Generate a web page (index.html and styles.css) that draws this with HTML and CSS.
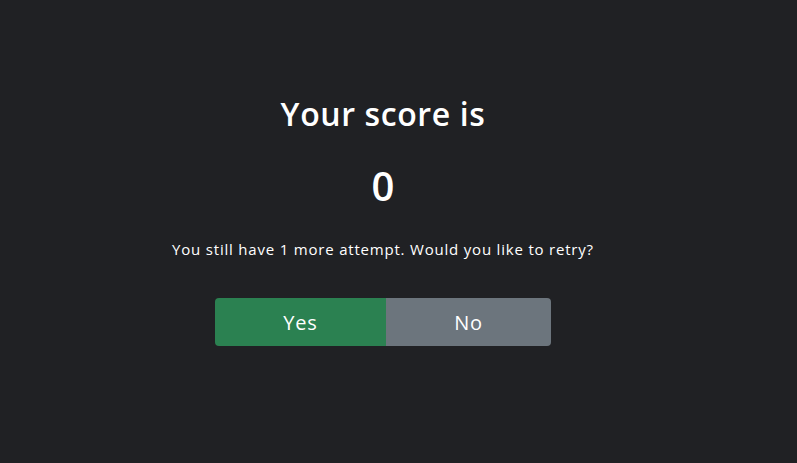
FILE: index.html
```html
<!DOCTYPE html>
<html>
<head>
<meta charset="utf-8">
<link rel="stylesheet" href="styles.css">
</head>
<body>
<main class="page">
  <h1 class="title">Your score is</h1>
  <div class="score">0</div>
  <p class="message">You still have 1 more attempt. Would you like to retry?</p>
  <div class="btn-group">
    <button class="btn btn-yes">Yes</button>
    <button class="btn btn-no">No</button>
  </div>
</main>
</body>
</html>
```
FILE: styles.css
```css
html, body {
  margin: 0;
  padding: 0;
  background: #202124;
  height: 100%;
}
body {
  font-family: "Open Sans", "Noto Sans", sans-serif;
  color: #ffffff;
}
.page {
  width: 766px;
  display: flex;
  flex-direction: column;
  align-items: center;
  padding-top: 92px;
}
.title {
  margin: 0;
  font-size: 32px;
  font-weight: 600;
  line-height: 44px;
  letter-spacing: 0.6px;
}
.score {
  margin-top: 24px;
  font-size: 40px;
  font-weight: 600;
  line-height: 52px;
}
.message {
  margin: 26px 0 0;
  font-size: 15px;
  line-height: 22px;
  letter-spacing: 0.8px;
}
.btn-group {
  display: flex;
  margin-top: 38px;
  border-radius: 4px;
  overflow: hidden;
}
.btn {
  border: none;
  height: 48px;
  font-family: inherit;
  font-size: 20px;
  font-weight: 500;
  letter-spacing: 0.8px;
  color: #ffffff;
  padding: 0;
}
.btn-yes {
  width: 171px;
  background: #2b8151;
}
.btn-no {
  width: 165px;
  background: #6c757d;
}
```
